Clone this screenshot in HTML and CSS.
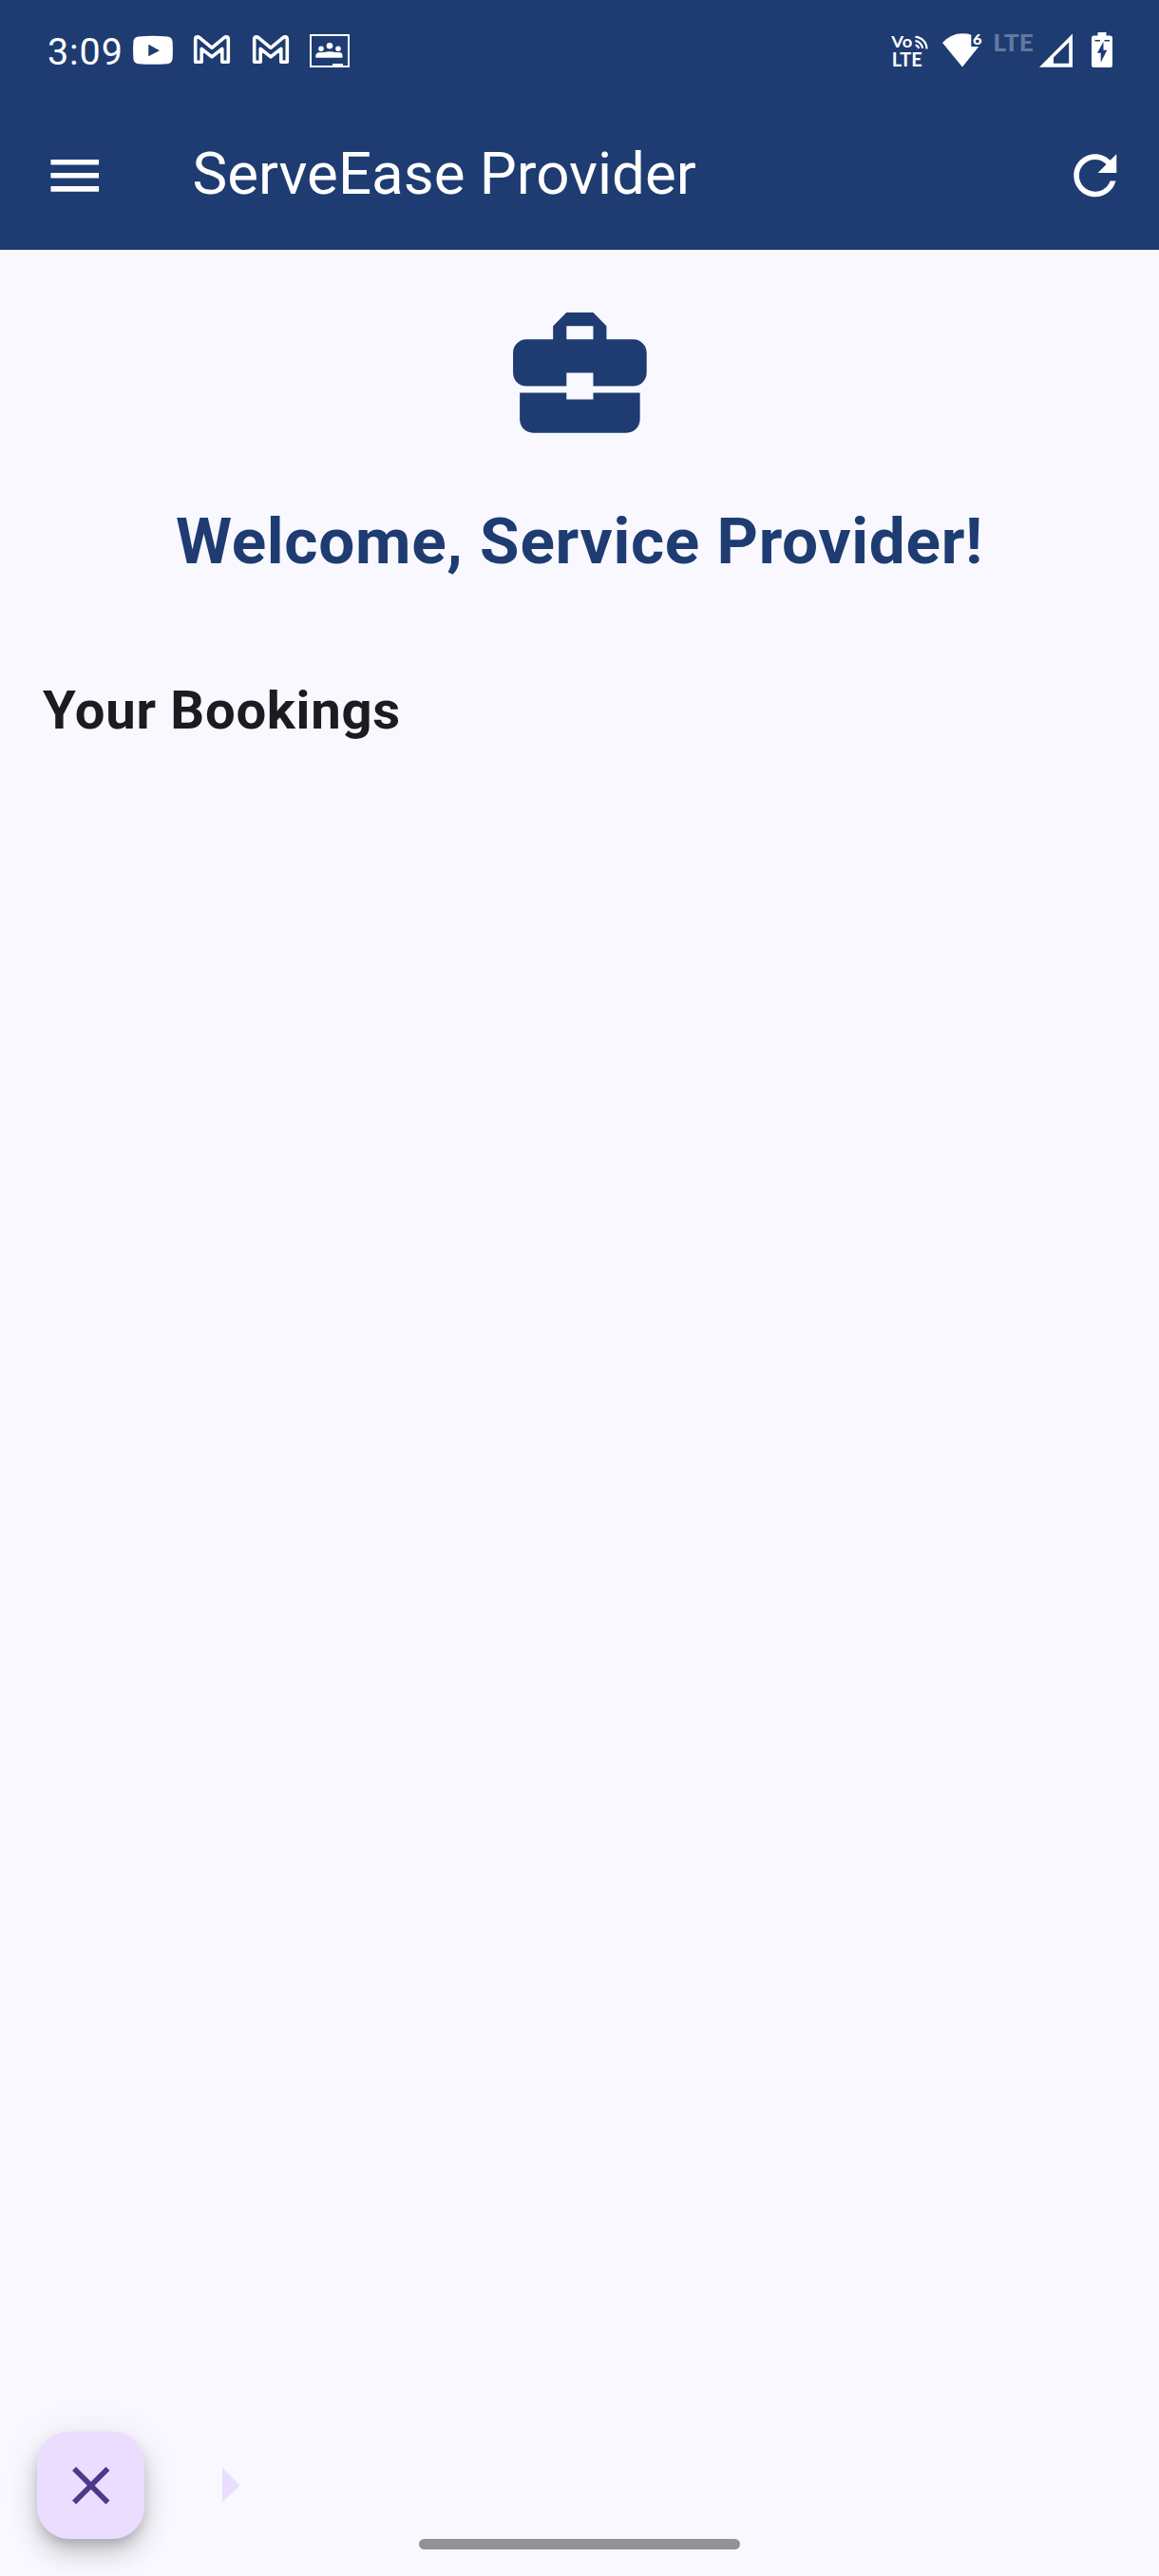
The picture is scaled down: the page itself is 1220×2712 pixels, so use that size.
FILE: index.html
```html
<!DOCTYPE html>
<html lang="en">
<head>
<meta charset="utf-8">
<title>ServeEase Provider</title>
<link rel="stylesheet" href="styles.css">
</head>
<body>
<div class="screen">
  <header class="header">
    <div class="status">
      <span class="clock">3:09</span>
      <svg class="st" width="42" height="40" viewBox="140 34 42 40"><path fill="#fff" fill-rule="evenodd" d="M146 38.4Q161 37.2 176 38.4Q181 38.7 181.6 43.5Q182.3 53 181.6 62Q181 66.8 176 67.3Q161 68.3 146 67.3Q141 66.8 140.4 62Q139.7 53 140.4 43.5Q141 38.7 146 38.4ZM156.3 46.7V59.3L168 53.2Z"/></svg>
      <svg class="st mail" width="40" height="40" viewBox="203 34 40 40"><path class="line" d="M205.7 65.2V41.5Q205.7 38.9 208 38.9Q209 38.9 210 39.7L223 50.3L236 39.7Q237 38.9 238 38.9Q240.3 38.9 240.3 41.5V65.2H233.8V51.3L223 59.8L212.2 51.3V65.2Z"/></svg>
      <svg class="st mail2" width="40" height="40" viewBox="203 34 40 40"><path class="line" d="M205.7 65.2V41.5Q205.7 38.9 208 38.9Q209 38.9 210 39.7L223 50.3L236 39.7Q237 38.9 238 38.9Q240.3 38.9 240.3 41.5V65.2H233.8V51.3L223 59.8L212.2 51.3V65.2Z"/></svg>
      <svg class="st room" width="42" height="40" viewBox="326 34 42 40"><rect x="327" y="37" width="40" height="33" fill="none" stroke="#fff" stroke-width="2"/><g fill="#fff"><circle cx="347" cy="48.2" r="3.3"/><circle cx="338" cy="51.2" r="2.8"/><circle cx="356" cy="51.2" r="2.8"/><path d="M332.3 60.8V58.5Q332.5 55.5 336 55.3L341 55Q343.5 54.5 347 54.3Q350.5 54.5 353 55L358 55.3Q360.5 55.5 360.5 58.5V60.8ZM350 67h11v3h-11z"/></g></svg>
      <span class="spacer"></span>
      <svg class="st" width="40" height="40" viewBox="938 34 40 40"><g fill="#fff" class="tag volte"><text x="938.3" y="50" font-size="17" textLength="22" lengthAdjust="spacingAndGlyphs">Vo</text><text x="938.7" y="70" font-size="20" textLength="32" lengthAdjust="spacingAndGlyphs">LTE</text></g><path fill="none" stroke="#fff" stroke-width="2.2" d="M963.5 38.8A12.500 12.500 0 0 1 975.5 51.5M963.5 43.2A8 8 0 0 1 971 51M963.5 47.500A4 4 0 0 1 967 51"/></svg>
      <svg class="st wifi" width="42" height="40" viewBox="992 34 42 40"><path fill="#fff" d="M992 45Q1001 35.2 1013 35.2Q1018 35.2 1022.3 36.7V49H1030.3L1013 70.5Z"/><text class="tag" fill="#fff" x="1024" y="46.6" font-size="15.5" textLength="9.5" lengthAdjust="spacingAndGlyphs">6</text></svg>
      <svg class="st lte" width="42" height="40" viewBox="1046 34 42 40"><text class="tag" fill="#64789f" x="1045.3" y="53.7" font-size="24.5" textLength="42.5" lengthAdjust="spacingAndGlyphs">LTE</text></svg>
      <svg class="st signal" width="36" height="40" viewBox="1094 34 36 40"><path fill="#fff" fill-rule="evenodd" d="M1094 70.7L1129 35.5V70.7ZM1109 60.5V66.7H1125.2V44.5Z"/></svg>
      <svg class="st battery" width="22" height="40" viewBox="1149 34 22 40"><path fill="#fff" fill-rule="evenodd" d="M1155.5 34H1164.5V37.5H1168.5Q1171 37.5 1171 40V68.5Q1171 71 1168.5 71H1151.5Q1149 71 1149 68.5V40Q1149 37.5 1151.5 37.5H1155.5ZM1152.5 42V43.5H1158V42ZM1162.5 42V43.5H1168V42ZM1161.5 44L1155 55.7H1158.7V65.7L1165.3 52.7H1161.5Z"/></svg>
    </div>
    <div class="appbar">
      <svg class="icon" viewBox="0 0 24 24" fill="#fff"><path d="M3 18h18v-2H3v2zm0-5h18v-2H3v2zm0-7v2h18V6H3z"/></svg>
      <h1 class="title">ServeEase Provider</h1>
      <svg class="icon" viewBox="0 0 24 24" fill="#fff"><path d="M17.65 6.35C16.2 4.9 14.21 4 12 4c-4.42 0-7.99 3.58-7.99 8s3.57 8 7.99 8c3.73 0 6.84-2.55 7.73-6h-2.08c-.82 2.33-3.04 4-5.65 4-3.31 0-6-2.69-6-6s2.69-6 6-6c1.66 0 3.14.69 4.22 1.78L13 11h7V4l-2.35 2.35z"/></svg>
    </div>
  </header>
  <main class="content">
    <svg class="case" viewBox="0 0 24 24" fill="#1e3c72"><path d="M10 16v-1H3.01L3 19c0 1.11.89 2 2 2h14c1.11 0 2-.89 2-2v-4h-7v1h-4zm10-9h-4.01V5l-2-2h-4l-2 2v2H4c-1.1 0-2 .9-2 2v3c0 1.11.89 2 2 2h6v-2h4v2h6c1.1 0 2-.9 2-2V9c0-1.1-.9-2-2-2zm-6 0h-4V5h4v2z"/></svg>
    <h2 class="welcome">Welcome, Service Provider!</h2>
    <h3 class="bookings">Your Bookings</h3>
  </main>
  <footer class="footer">
    <div class="fab"><svg class="icon" viewBox="0 0 24 24" fill="#4f378a"><path d="M19 6.41L17.59 5 12 10.59 6.41 5 5 6.41 10.59 12 5 17.59 6.41 19 12 13.41 17.59 19 19 17.59 13.41 12z"/></svg></div>
    <svg class="arrow" width="19" height="37" viewBox="0 0 19 37"><path fill="#eaddff" d="M0 0L18.5 18.3L0 36.6Z"/></svg>
  </footer>
  <div class="pill"></div>
</div>
</body>
</html>
```
FILE: styles.css
```css
body {
  margin: 0;
  font-family: Roboto, sans-serif;
  background: #f9f8ff;
}
.screen {
  display: flex;
  flex-direction: column;
  width: 1220px;
  height: 2712px;
  overflow: hidden;
}
.header {
  height: 263.25px;
  background: #1e3c72;
  color: #fff;
}
.status {
  box-sizing: border-box;
  display: flex;
  height: 105.75px;
  padding: 34px 49px 0 50px;
}
.clock {
  width: 90px;
  font-size: 39.5px;
  line-height: 42px;
  letter-spacing: 0.9px;
}
.st { flex: none; overflow: visible; }
.line { fill: none; stroke: #fff; stroke-width: 3.6; stroke-linejoin: round; }
.tag { font-family: Lato, sans-serif; font-weight: 900; }
.volte { font-weight: 700; }
.mail { margin-left: 21px; }
.mail2 { margin-left: 22px; }
.room { margin-left: 21px; }
.spacer { flex: 1; }
.wifi { margin-left: 14px; }
.lte { margin-left: 12px; }
.signal { margin-left: 6px; }
.battery { margin-left: 19px; }
.appbar {
  box-sizing: border-box;
  display: flex;
  align-items: center;
  height: 157.5px;
  padding: 0 33.75px 0 45px;
}
.icon {
  display: block;
  flex: none;
  width: 67.5px;
  height: 67.5px;
}
.title {
  flex: 1;
  margin: 0 0 4px 90px;
  font-size: 61.875px;
  font-weight: 400;
  line-height: 78px;
}
.content {
  display: flex;
  flex: 1;
  flex-direction: column;
  align-items: center;
  padding: 44.75px 45px 0;
}
.case { width: 168.75px; height: 168.75px; }
.welcome {
  margin: 45px 0 0;
  color: #1e3c72;
  font-size: 67.5px;
  font-weight: 700;
  line-height: 96px;
  letter-spacing: 0.7px;
}
.bookings {
  align-self: flex-start;
  margin: 90px 0 0;
  color: #1b1b21;
  font-size: 56.25px;
  font-weight: 700;
  line-height: 80px;
  letter-spacing: 0.7px;
}
.footer {
  display: flex;
  align-items: center;
  gap: 82.6px;
  padding-left: 39.4px;
}
.fab {
  display: flex;
  align-items: center;
  justify-content: center;
  width: 112.5px;
  height: 112.5px;
  border-radius: 33.75px;
  background: #eaddff;
  box-shadow: 0 8px 14px -3px rgba(0, 0, 0, 0.2), 0 17px 28px rgba(0, 0, 0, 0.14), 0 3px 40px rgba(0, 0, 0, 0.08);
}
.pill {
  align-self: center;
  width: 338px;
  height: 11.5px;
  margin-bottom: 28px;
  border-radius: 6px;
  background: #929196;
}
```
